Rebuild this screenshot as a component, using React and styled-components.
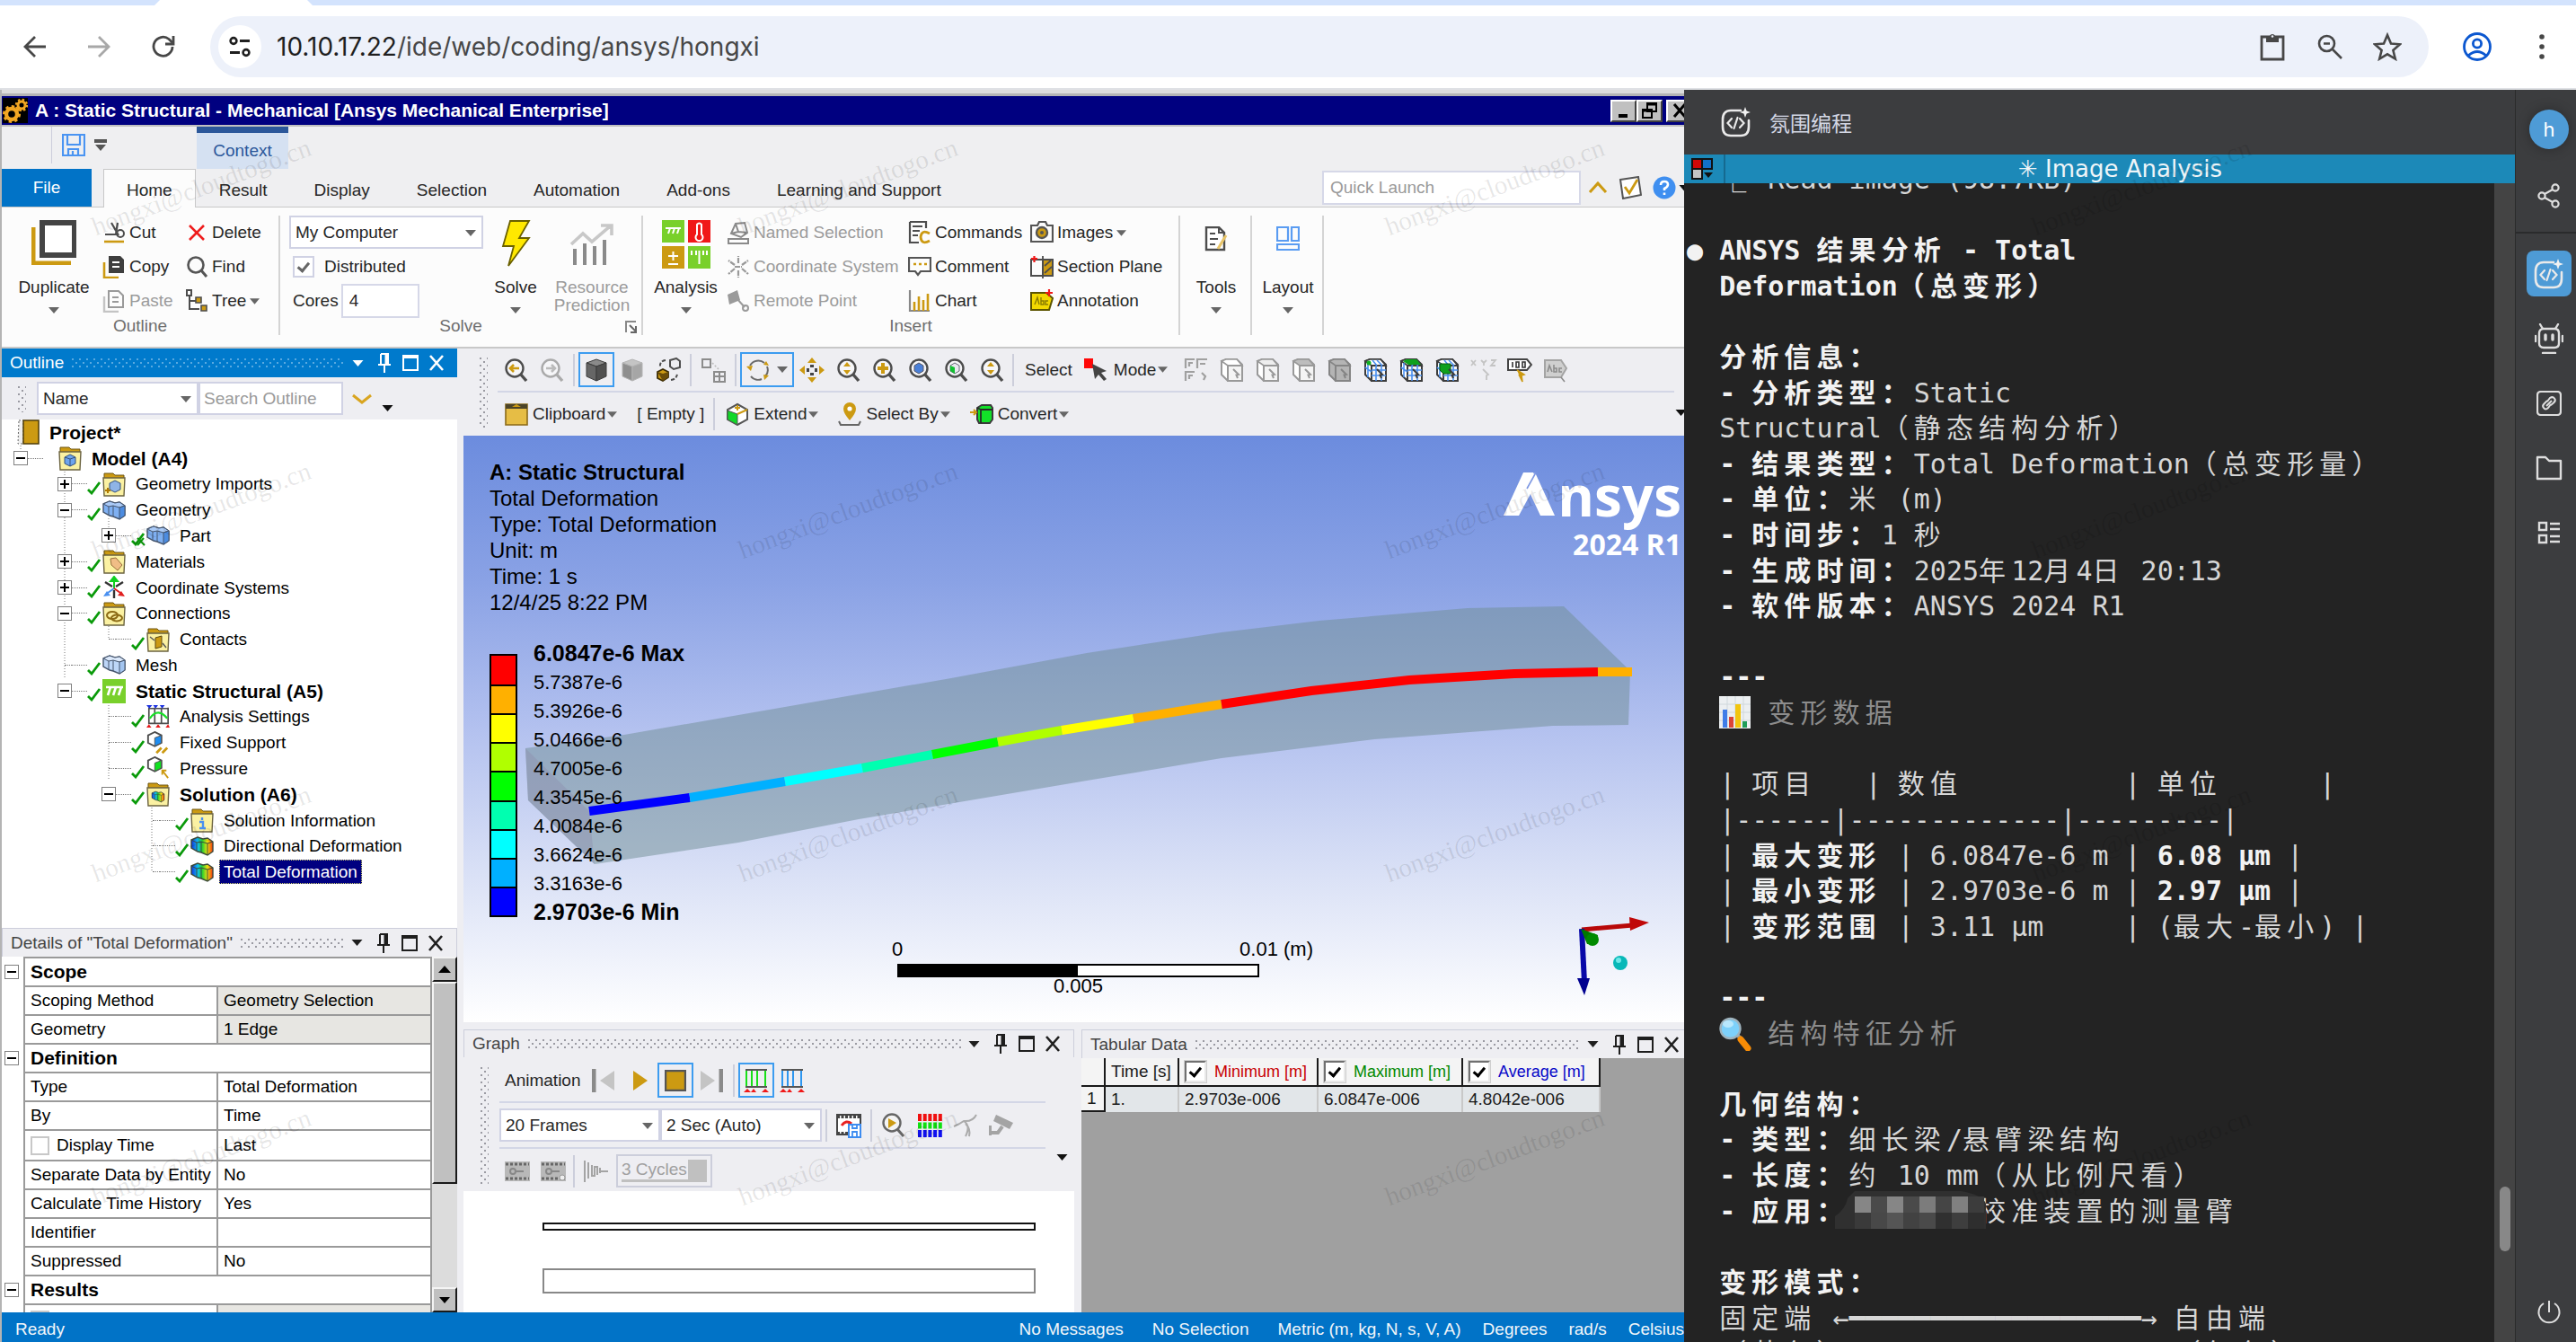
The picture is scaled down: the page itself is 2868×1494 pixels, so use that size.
import React from 'react';
import styled, { createGlobalStyle, css } from 'styled-components';

const UI = '"Liberation Sans", Arial, "Noto Sans CJK SC", sans-serif';
const MONO = '"DejaVu Sans Mono", "Noto Sans CJK SC", monospace';

const Global = createGlobalStyle`
  *, *::before, *::after { box-sizing: border-box; }
  html, body { margin: 0; padding: 0; }
  body { font-family: ${UI}; font-size: 19px; line-height: 20px; color: #262626; overflow: hidden; }
  button, input, select { font: inherit; color: inherit; margin: 0; padding: 0; border: 0; background: none; border-radius: 0; outline: none; }
  button { cursor: pointer; white-space: nowrap; }
  a { color: inherit; text-decoration: none; }
  svg { display: block; flex: none; }
`;

/* ---------- shell ---------- */

const Page = styled.div`
  position: relative;
  height: 100vh;
  display: grid;
  grid-template-rows: 100px minmax(0, 1fr);
  overflow: hidden;
`;
const Body = styled.div`
  display: grid;
  grid-template-columns: minmax(0, 1fr) 926px 67px;
  min-height: 0;
`;

/* ---------- browser ---------- */

const Browser = styled.header`
  background: #fff;
  border-bottom: 2px solid #dfe1e5;
  display: flex;
  flex-direction: column;
`;
const TabStrip = styled.div`
  height: 6px;
  background: #d3e3fd;
  padding-left: 172px;
`;
const ActiveTab = styled.div`
  width: 176px;
  height: 6px;
  background: #fff;
  clip-path: polygon(6px 0, 170px 0, 176px 100%, 0 100%);
`;
const NavRow = styled.div`
  flex: 1;
  display: flex;
  align-items: center;
  padding-left: 16px;
  color: #474747;
`;
const NavBtn = styled.button`
  width: ${(p) => p.$w || 72}px;
  height: 64px;
  display: grid;
  place-items: center;
  color: ${(p) => p.$c || '#474747'};
`;
const AddressBar = styled.div`
  flex: 1;
  height: 68px;
  margin: 0 20px 0 28px;
  border-radius: 34px;
  background: #edf1fa;
  display: flex;
  align-items: center;
  padding: 0 14px 0 9px;
`;
const SiteInfo = styled.button`
  width: 48px;
  height: 48px;
  border-radius: 50%;
  background: #fff;
  display: grid;
  place-items: center;
  margin-right: 17px;
`;
const UrlBox = styled.div`
  flex: 1;
  font-family: Inter, Roboto, sans-serif;
  font-size: 28px;
  line-height: 40px;
  color: #474747;
  b { font-weight: 400; color: #1f1f1f; }
`;

/* ---------- remote desktop ---------- */

const Remote = styled.main`
  display: flex;
  flex-direction: column;
  min-width: 0;
  min-height: 0;
  overflow: hidden;
  background: #eeeef2;
  border-left: 2px solid #b4b4b4;
`;
const TitleBar = styled.div`
  flex: none;
  height: 41px;
  border-top: 4px solid #dcdcdc;
  border-bottom: 2px solid #c0c0c0;
  box-shadow: inset 0 3px 0 #b4b4b4;
  padding-top: 3px;
  background: #000080;
  color: #fff;
  font-weight: 700;
  font-size: 21px;
  display: flex;
  align-items: center;
  gap: 8px;
  white-space: nowrap;
  svg { margin-left: 1px; }
`;
const WinButtons = styled.div`
  margin-left: auto;
  margin-right: -9px;
  display: flex;
`;
const WinButton = styled.button`
  width: 29px;
  height: 25px;
  background: #c0c0c0;
  border: 2px solid;
  border-color: #fff #404040 #404040 #fff;
  display: grid;
  place-items: center;
  svg { margin: 0; }
  &:last-child { margin-left: 4px; }
`;

const RibbonTop = styled.div`
  flex: none;
  height: 47px;
  background: #efeff1;
  display: flex;
`;
const QuickAccess = styled.div`
  width: 217px;
  display: flex;
  padding: 8px 0 14px 55px;
  gap: 10px;
  button:first-child { margin-left: 12px; }
  position: relative;
  &::before { content: ''; position: absolute; left: 55px; top: 0; height: 41px; border-left: 1px solid #ccceDB; }
`;
const ContextTab = styled.div`
  width: 102px;
  background: #d5e1f2;
  border-top: 7px solid #2b579a;
  color: #2b579a;
  text-align: center;
  line-height: 40px;
`;
const TabRow = styled.nav`
  flex: none;
  height: 43px;
  background: #efeff1;
  border-bottom: 1px solid #c8c8c8;
  display: flex;
  align-items: stretch;
`;
const FileTab = styled.button`
  width: 100px;
  margin-right: 13px;
  background: #0173c7;
  color: #fff;
`;
const Tab = styled.button`
  padding: 4px 25px 0;
  border: 1px solid transparent;
  border-bottom: 0;
  ${(p) => p.$on && css`
    background: #fcfcfc;
    border-color: #c8c8c8;
    margin-bottom: -1px;
  `}
`;
const TabTail = styled.div`
  margin-left: auto;
  margin-right: -8px;
  display: flex;
  align-items: center;
  gap: 12px;
  svg:last-child { margin-left: -10px; }
`;
const QuickLaunch = styled.input`
  width: 288px;
  height: 38px;
  border: 2px solid #d6d8e8;
  background: #fff;
  padding: 0 7px;
  margin-right: -4px;
  &::placeholder { color: #9a9a9a; opacity: 1; }
`;

const Ribbon = styled.div`
  flex: none;
  height: 157px;
  background: #fcfcfc;
  border-bottom: 2px solid #c8c8c8;
  display: flex;
  padding-top: 9px;
`;
const Group = styled.section`
  width: ${(p) => p.$w}px;
  height: 133px;
  border-right: 2px solid #d4d4d4;
  position: relative;
  display: flex;
  flex-direction: column;
`;
const GroupBody = styled.div`
  height: 113px;
  display: flex;
  padding-left: ${(p) => p.$pl || 0}px;
`;
const GroupLabel = styled.div`
  text-align: center;
  color: #6e6e6e;
`;
const Launcher = styled.button`
  position: absolute;
  right: 4px;
  bottom: 2px;
`;
const BigBtn = styled.button`
  width: ${(p) => p.$w}px;
  display: flex;
  flex-direction: column;
  align-items: center;
  padding-top: 5px;
  color: ${(p) => (p.$off ? '#9b9b9b' : 'inherit')};
  white-space: pre;
`;
const BigIcon = styled.span`
  height: 53px;
  margin-bottom: 12px;
  padding-top: ${(p) => p.$pt || 0}px;
`;
const BigArrow = styled.span`margin-top: 12px;`;
const Stack = styled.div`
  width: ${(p) => p.$w}px;
  display: grid;
  grid-auto-rows: 38px;
`;
const SmallBtn = styled.button`
  display: flex;
  align-items: center;
  gap: 4px;
  color: ${(p) => (p.$off ? '#9b9b9b' : 'inherit')};
`;
const FieldRow = styled.label`
  display: flex;
  align-items: center;
  gap: ${(p) => p.$gap || 3}px;
  padding-left: 4px;
`;
const CoresInput = styled.input`
  width: 87px;
  height: 38px;
  border: 2px solid #d6d8e8;
  background: #fff;
  padding-left: 7px;
`;

const SelectBox = styled.div`
  position: relative;
  width: ${(p) => p.$w}px;
  height: 37px;
  select {
    appearance: none;
    width: 100%;
    height: 100%;
    background: #fff;
    border: 2px solid #d0d2e4;
    padding: 0 24px 0 5px;
    color: #262626;
  }
  svg { position: absolute; right: 8px; top: 16px; pointer-events: none; }
`;

const Tick = styled.input.attrs({ type: 'checkbox' })`
  appearance: none;
  width: 24px;
  height: 24px;
  background: #fff;
  border: 2px solid #d0d2e4;
  display: grid;
  place-items: center;
  flex: none;
  &:checked::after {
    content: '';
    width: 8px;
    height: 13px;
    border: solid ${(p) => p.$tick || '#666'};
    border-width: 0 3px 3px 0;
    transform: rotate(40deg) translate(-1px, -1px);
  }
  ${(p) => p.$sunken && css`
    border: 2px solid;
    border-color: #707070 #e8e8e8 #e8e8e8 #707070;
    outline: 1px solid #cfcfcf;
  `}
`;

/* ---------- workspace ---------- */

const Workspace = styled.div`
  flex: 1;
  min-height: 0;
  display: grid;
  grid-template-columns: 507px minmax(0, 1fr);
  column-gap: 7px;
`;
const Dock = styled.div`
  display: flex;
  flex-direction: column;
  min-height: 0;
  min-width: 0;
`;
const PanelHead = styled.div`
  flex: none;
  height: ${(p) => p.$h || 32}px;
  display: flex;
  align-items: center;
  padding: 0 ${(p) => (p.$flush ? 0 : 9)}px 0 9px;
  background: ${(p) => (p.$on ? '#007acc' : '#eeeef2')};
  color: ${(p) => (p.$on ? '#fff' : '#444')};
  border: ${(p) => (p.$on ? '0' : '1px solid #ccceDB')};
  border-width: ${(p) => (p.$flush ? '1px 0 0 1px' : '1px 1px 0')};
  white-space: nowrap;
`;
const Dots = styled.span`
  flex: 1;
  height: 12px;
  margin-left: 8px;
  background-image: radial-gradient(circle at 2px 2px, ${(p) => p.$c} 1px, transparent 1px), radial-gradient(circle at 6px 6px, ${(p) => p.$c} 1px, transparent 1px);
  background-size: 8px 8px;
`;
const HeadBtn = styled.button`
  width: 29px;
  height: 30px;
  display: grid;
  place-items: center;
  color: ${(p) => (p.$on ? '#fff' : '#1e1e1e')};
`;
const Grip = styled.span`
  width: 10px;
  align-self: stretch;
  margin: ${(p) => p.$m || '9px 0'};
  flex: none;
  background-image: radial-gradient(circle at 2px 2px, #9a9aa2 1px, transparent 1px), radial-gradient(circle at 6px 6px, #9a9aa2 1px, transparent 1px);
  background-size: 8px 8px;
`;

const Filter = styled.div`
  flex: none;
  height: 47px;
  display: flex;
  align-items: center;
  padding-left: 17px;
`;
const SearchInput = styled.input`
  width: 161px;
  height: 37px;
  border: 2px solid #d0d2e4;
  background: #fff;
  padding-left: 4px;
  margin: 0 9px 0 0;
  &::placeholder { color: #9a9a9a; opacity: 1; }
`;
const TreeArea = styled.div`
  flex: 1;
  background: #fff;
  position: relative;
  min-height: 0;
  color: #000;
`;
const TreeLines = styled.svg`
  position: absolute;
  left: 0;
  top: 0;
`;
const Tree = styled.ul`
  position: relative;
  list-style: none;
  margin: 0;
  padding: 0;
  height: 518px;
  display: grid;
  grid-auto-rows: 1fr;
`;
const TreeRow = styled.li`
  display: flex;
  align-items: center;
  padding-left: ${(p) => p.$pl}px;
  white-space: nowrap;
  font-weight: ${(p) => (p.$bold ? 700 : 400)};
  font-size: ${(p) => (p.$bold ? 21 : 19)}px;
`;
const Expander = styled.button`
  width: 16px;
  height: 16px;
  border: 1px solid #808080;
  background: #fff;
  display: grid;
  place-items: center;
  flex: none;
`;
const Connector = styled.span`
  width: ${(p) => p.$w}px;
  margin-left: ${(p) => p.$ml || 0}px;
  border-top: 1px dotted #777;
  flex: none;
`;
const CheckCell = styled.span`
  width: 17px;
  flex: none;
  padding-top: 9px;
`;
const NodeLabel = styled.span`
  margin-left: 6px;
  padding: 0 4px;
  border: 1px solid transparent;
  line-height: 25px;
  ${(p) => p.$sel && css`
    background: #000080;
    color: #fff;
    border: 1px dotted #d8d870;
  `}
`;

const Details = styled.div`
  flex: none;
  height: 396px;
  display: flex;
  background: #fff;
  overflow: hidden;
`;
const DetailTable = styled.table`
  width: 478px;
  height: 422px;
  border-collapse: collapse;
  table-layout: fixed;
  color: #000;
  th, td { padding: 0 6px; text-align: left; font-weight: 400; border: 2px solid #9a9a9a; white-space: nowrap; line-height: 20px; }
  td:first-child { border-width: 0 2px 0 0; padding: 0 3px; }
  th[colspan] { font-weight: 700; font-size: 21px; }
`;
const Val = styled.td`
  background: ${(p) => (p.$g ? '#e7e6e2' : '#fff')};
`;
const Inline = styled.label`
  display: flex;
  align-items: center;
  gap: 8px;
`;
const SmallTick = styled(Tick)`
  width: 21px;
  height: 21px;
  border-color: #c8c8c8;
`;
const Scroll = styled.div`
  flex: 1;
  display: flex;
  flex-direction: column;
  background: #dcdcdc;
`;
const ScrollBtn = styled.button`
  height: 28px;
  background: #c0c0c0;
  border: 2px solid;
  border-color: #f4f4f4 #1a1a1a #1a1a1a #f4f4f4;
  display: grid;
  place-items: center;
`;
const Thumb = styled.div`
  height: 225px;
  background: #c0c0c0;
  border: 2px solid;
  border-color: #f4f4f4 #1a1a1a #1a1a1a #f4f4f4;
  margin-bottom: auto;
`;

const ToolArea = styled.div`
  flex: none;
  height: ${(p) => p.$h}px;
  display: flex;
  padding-left: ${(p) => p.$pl}px;
  background: #eeeef2;
`;
const ToolRows = styled.div`
  flex: 1;
  min-width: 0;
  margin: ${(p) => p.$m};
`;
const ToolRow = styled.div`
  height: ${(p) => p.$h}px;
  display: flex;
  align-items: center;
  white-space: nowrap;
  & + & { border-top: 2px solid #d3d6e6; }
`;
const Tool = styled.button`
  width: ${(p) => p.$w || 40}px;
  height: 39px;
  display: flex;
  align-items: center;
  justify-content: center;
  gap: 8px;
  flex: none;
  ${(p) => p.$on && css`border: 2px solid #3c9cf0;`}
`;
const Sep = styled.span`
  width: 2px;
  height: 36px;
  background: #ccceDB;
  margin: 0 ${(p) => (p.$r === undefined ? 4 : p.$r)}px 0 ${(p) => (p.$l === undefined ? 4 : p.$l)}px;
  flex: none;
`;
const DropBtn = styled.button`
  display: flex;
  align-items: center;
  gap: 2px;
  margin-right: ${(p) => (p.$mr === undefined ? 22 : p.$mr)}px;
  svg:first-child { margin-right: 3px; }
`;
const ToolLabel = styled.span`
  margin: 0 ${(p) => p.$r || 0}px 0 ${(p) => p.$l || 0}px;
`;
const Overflow = styled.button`
  align-self: ${(p) => p.$at || 'center'};
  margin: ${(p) => p.$m || 0};
  flex: none;
`;

const Viewport = styled.div`
  flex: 1;
  min-height: 0;
  position: relative;
  overflow: hidden;
  background: linear-gradient(#6c8cde 0%, #8aa2e5 25%, #b3c1ef 50%, #dae1f6 75%, #fff 100%);
  color: #000;
`;
const Scene = styled.svg`
  position: absolute;
  inset: 0;
  width: 100%;
  height: 100%;
`;
const Caption = styled.div`
  position: relative;
  padding: 26px 0 0 29px;
  font-size: 24px;
  line-height: 29px;
`;
const Legend = styled.div`
  position: relative;
  display: flex;
  gap: 18px;
  padding: 27px 0 0 29px;
`;
const LegendBar = styled.div`
  width: 31px;
  height: 293px;
  margin-top: 16px;
  border: 2px solid #000;
  display: grid;
  grid-auto-rows: 1fr;
`;
const Swatch = styled.div`
  background: ${(p) => p.$c};
  & + & { border-top: 2px solid #000; }
`;
const LegendText = styled.ol`
  list-style: none;
  margin: 0;
  padding: 0;
  height: 320px;
  display: grid;
  grid-auto-rows: 1fr;
  align-items: center;
  font-size: 22px;
  b { font-size: 25px; }
`;
const Brand = styled.div`
  position: absolute;
  right: 3px;
  top: 31px;
  color: #fff;
  text-align: right;
  font-family: "Open Sans", sans-serif;
  font-weight: 700;
`;
const BrandName = styled.div`
  display: flex;
  justify-content: flex-end;
  font-size: 62px;
  line-height: 70px;
  svg { margin: 10px 3px 0 0; }
`;
const BrandVer = styled.div`
  font-size: 32px;
  line-height: 40px;
`;
const Ruler = styled.div`
  position: absolute;
  left: 483px;
  bottom: 30px;
  width: 403px;
  font-size: 22px;
  line-height: 24px;
`;
const RulerTop = styled.div`
  display: flex;
  justify-content: space-between;
  margin: 0 -60px 4px -6px;
`;
const RulerBar = styled.div`
  height: 15px;
  border: 2px solid #000;
  background: linear-gradient(90deg, #000 50%, #fff 50%);
`;
const RulerMid = styled.div`
  text-align: center;
  line-height: 20px;
`;

const Bottom = styled.div`
  flex: none;
  height: 315px;
  margin-top: 8px;
  display: grid;
  grid-template-columns: 680px minmax(0, 1fr);
  column-gap: 8px;
`;
const GraphArea = styled.div`
  flex: 1;
  background: #fff;
  padding: 35px 43px 0 88px;
`;
const Track = styled.div`
  height: ${(p) => p.$h}px;
  border: 2px solid ${(p) => p.$c};
  margin-bottom: 42px;
`;
const CycleBox = styled.div`
  width: 107px;
  height: 37px;
  border: 2px solid #ccceDB;
  padding: 4px;
  display: flex;
  margin-left: 3px;
  input { width: 74px; color: #a0a0a0; border-bottom: 3px solid #c0c0c0; }
  &::after { content: ''; flex: 1; background: #c0c0c0; }
`;
const DataArea = styled.div`
  flex: 1;
  background: #a0a0a0;
  overflow: hidden;
`;
const DataTable = styled.table`
  border-collapse: separate;
  border-spacing: 0;
  table-layout: fixed;
  width: 578px;
  color: #1a1a1a;
  th, td { padding: 0 6px; text-align: left; font-weight: 400; white-space: nowrap; }
  thead th { height: 32px; background: #f4f4f4; border: solid #1a1a1a; border-width: 0 2px 2px 0; }
  tbody td { height: 28px; background: #e2e6e9; border-right: 2px solid #c8c8c8; }
  tbody th { background: #f4f4f4; border: solid #1a1a1a; border-width: 0 2px 2px 0; }
`;
const SeriesHead = styled.label`
  display: flex;
  align-items: center;
  gap: 9px;
  color: ${(p) => p.$c};
  font-size: 18px;
`;
const Status = styled.footer`
  flex: none;
  height: 33px;
  background: #0173c7;
  color: #f2f6fa;
  display: flex;
  align-items: center;
  gap: 24px;
  padding: 4px 0 0 15px;
  white-space: nowrap;
`;
const StatusItem = styled.span`
  margin-left: ${(p) => p.$ml || 0};
`;

/* ---------- assistant ---------- */

const Assistant = styled.section`
  display: flex;
  flex-direction: column;
  min-height: 0;
  background: #232323;
  border-right: 1px solid #2b2b2b;
`;
const AssistHead = styled.div`
  flex: none;
  height: 72px;
  background: #3c3d3f;
  display: flex;
  align-items: center;
  gap: 20px;
  padding-left: 41px;
  color: #d3d7e4;
  font-family: "Noto Sans CJK SC", sans-serif;
  font-size: 23px;
`;
const Pane = styled.div`
  flex: none;
  height: 32px;
  background: #1c89b8;
  display: flex;
  align-items: center;
  color: #eef5f8;
  font-family: "DejaVu Sans", sans-serif;
  font-size: 26px;
  line-height: 32px;
`;
const PaneIcon = styled.button`
  width: 46px;
  height: 32px;
  border-right: 2px solid #156a90;
  padding-left: 8px;
`;
const PaneTitle = styled.div`
  flex: 1;
  text-align: center;
`;
const TermWrap = styled.div`
  flex: 1;
  min-height: 0;
  display: flex;
`;
const Term = styled.div`
  flex: 1;
  overflow: hidden;
  padding-left: 3px;
`;
const Lines = styled.div`
  height: 1347px;
  margin-top: -24px;
  display: grid;
  grid-auto-rows: 1fr;
  align-items: center;
  font-family: ${MONO};
  font-size: 30px;
  line-height: 38px;
  color: #d6d6d6;
  white-space: pre;
  b { color: #f2f2f2; }
`;
const TLine = styled.div`
  height: 38px;
  color: ${(p) => p.$c || 'inherit'};
`;
const Cell = styled.span`
  display: inline-block;
  width: ${(p) => p.$n || 2}ch;
  vertical-align: top;
`;
const TermScroll = styled.div`
  width: 23px;
  background: #444;
  padding: 1117px 5px 0 6px;
  &::after { content: ''; display: block; height: 72px; border-radius: 6px; background: #888; }
`;
const Blur = styled.span`
  display: inline-block;
  width: 8ch;
  height: 38px;
  vertical-align: top;
  position: relative;
  svg { position: absolute; left: -16px; top: -4px; }
`;
const Side = styled.aside`
  background: #3c3d3f;
  display: flex;
  flex-direction: column;
  align-items: center;
  padding-left: 7px;
  color: #dedede;
`;
const Avatar = styled.button`
  width: 44px;
  height: 44px;
  margin-top: 22px;
  border-radius: 50%;
  background: #4e9bd6;
  color: #fff;
  font-family: Inter, sans-serif;
  font-size: 22px;
  box-shadow: 0 0 14px rgba(0, 0, 0, 0.3);
`;
const SideBtn = styled.button`
  width: 50px;
  height: 51px;
  margin-top: ${(p) => (p.$mt === undefined ? 21 : p.$mt)}px;
  border-radius: 8px;
  display: grid;
  place-items: center;
  background: ${(p) => (p.$on ? '#4e9bd6' : 'none')};
`;
const SideRule = styled.hr`
  width: 67px;
  margin: 15px 0 0 -7px;
  border: 0;
  border-top: 2px solid #2a2b2c;
`;

const Marks = styled.div`
  position: absolute;
  inset: 100px 0 0 0;
  overflow: hidden;
  pointer-events: none;
  display: grid;
  grid-template-columns: repeat(4, 720px);
  grid-auto-rows: 360px;
`;
const Mark = styled.div`
  width: 448px;
  height: 216px;
  display: grid;
  place-items: center;
  font-family: "Liberation Serif", serif;
  font-size: 29px;
  color: rgba(0, 0, 0, 0.1);
  span { transform: rotate(-20.5deg); }
`;

/* ---------- icons ---------- */

const I = ({ w = 26, h = 26, vb, children, ...r }) => (
  <svg width={w} height={h} viewBox={vb || `0 0 ${w} ${h}`} fill="none" aria-hidden="true" {...r}>{children}</svg>
);
const Down = ({ c = '#666', w = 12 }) => (
  <I w={w} h={7} vb="0 0 12 7"><path d="M0 0H12L6 7Z" fill={c} /></I>
);
const G = '#cc9a12';
const D = '#4d4d4d';

const Mag = ({ c = D, children }) => (
  <I w={28} h={28}>
    <circle cx="13" cy="12" r="9.5" stroke={c} strokeWidth="2.4" fill="#f6f6f8" />
    <path d="M19.5 18.5L26 26" stroke={c} strokeWidth="3.4" />
    {children}
  </I>
);
const Cube = ({ a = '#8a8a8a', b = '#666', c = '#505050', s = '#3c3c3c' }) => (
  <I w={26} h={26}>
    <path d="M13 1L24 5L13 9L2 5Z" fill={a} stroke={s} />
    <path d="M2 5L13 9V25L2 20Z" fill={b} stroke={s} />
    <path d="M24 5L13 9V25L24 20Z" fill={c} stroke={s} />
  </I>
);
const SelCube = ({ front = '#f4f4f4', side = '#fff', top = '#fff', s = '#999', grid, mark }) => (
  <I w={28} h={28}>
    <path d="M2 4L7 2H19L25 8V26H9L2 19Z" fill={side} stroke={s} strokeWidth="2" />
    <path d="M2 4L9 9H25L19 2H7Z" fill={top} stroke={s} strokeWidth="1.6" />
    <path d="M9 9H25V26H9Z" fill={front} stroke={s} strokeWidth="2" />
    {grid && <path d="M14 9V26M20 9V26M9 14H25M9 20H25M5 6V22M2 11L9 16M10 3L15 9M15 3L21 9" stroke="#4a90f0" strokeWidth="1.6" />}
    {mark}
    <path d="M15 13L21 19L18.5 19.5L20 23" stroke={s} strokeWidth="2" />
  </I>
);
const Folder = ({ children }) => (
  <I w={26} h={28}>
    <path d="M2 8V2H12L14 4H24V8Z" fill={G} stroke="#6d5410" />
    <path d="M1 7H25L24 27H2Z" fill="#fbf1a2" stroke="#6b6340" strokeWidth="1.4" />
    {children}
  </I>
);
const Boxes = ({ a, b, c }) => (
  <I w={26} h={24}>
    <path d="M1 5L8 2L14 4L19 3L25 7V18L19 22L12 19L8 18L1 14Z" fill={b} stroke="#44546c" strokeWidth="1.4" />
    <path d="M1 5L8 2L14 4L19 3L25 7L19 9L12 7L7 8Z" fill={a} stroke="#44546c" />
    <path d="M19 9L25 7V18L19 22Z" fill={c} stroke="#44546c" />
    <path d="M12 7V19M7 8V17" stroke="#44546c" />
  </I>
);
const Rainbow = ({ w = 26 }) => (
  <I w={w} h={24} vb="0 0 26 24">
    <defs>
      <linearGradient id="rb" x1="0" x2="1"><stop offset="0" stopColor="#1030e0" /><stop offset=".3" stopColor="#10c0f0" /><stop offset=".5" stopColor="#20d030" /><stop offset=".75" stopColor="#f0e010" /><stop offset="1" stopColor="#f03010" /></linearGradient>
    </defs>
    <path d="M1 5L8 2L14 4L19 3L25 7V18L19 22L12 19L8 18L1 14Z" fill="url(#rb)" stroke="#3a4a3a" strokeWidth="1.4" />
    <path d="M1 5L7 8V17M7 8L12 7V19M12 7L19 9V22M19 9L25 7" stroke="#3a4a3a" />
  </I>
);
const nodeIcons = {
  project: <I w={26} h={28}><path d="M3 1H8V27H2Z" fill="#eee" stroke="#666" strokeDasharray="2 2" /><path d="M8 1H25V27H8Z" fill={G} stroke="#4d3c08" strokeWidth="1.5" /></I>,
  model: <Folder><path d="M13 10L19 13V20L13 23L7 20V13Z" fill="#6ea4ee" stroke="#33507c" /><path d="M7 13L13 15L19 13M13 15V23" stroke="#33507c" /></Folder>,
  imports: <Folder><path d="M14 10L20 13V20L14 23L8 20V13Z" fill="#8fb4e6" stroke="#33507c" /><path d="M3 21H9M6 18V24" stroke="#b07a00" strokeWidth="2" /></Folder>,
  geometry: <Boxes a="#a9c9f6" b="#7fb0f2" c="#4c8ce0" />,
  materials: <Folder><path d="M9 11L15 10L22 18L17 24L10 18Z" fill="#f0bd86" stroke="#96703c" /></Folder>,
  coords: <I w={26} h={26}><path d="M13 14V4M9 6L13 1L17 6Z" stroke="#10d020" fill="#10d020" strokeWidth="2" /><path d="M13 14L6 19" stroke="#4a90f0" strokeWidth="2" /><path d="M1 23L9 22L5 17Z" fill="#4a90f0" /><path d="M13 14L20 19" stroke="#e02020" strokeWidth="2" /><path d="M25 23L17 22L21 17Z" fill="#e02020" /><path d="M3 7L11 12M23 7L15 12M13 16V25" stroke="#333" strokeWidth="2.4" /></I>,
  connections: <Folder><ellipse cx="11" cy="16" rx="6" ry="4" stroke="#8c6a14" strokeWidth="2" /><ellipse cx="16" cy="19" rx="6" ry="3.5" stroke="#8c6a14" strokeWidth="2" /></Folder>,
  contacts: <Folder><path d="M10 12L17 10V22L10 24Z" fill={G} stroke="#5a470e" /><path d="M4 11L9 15M18 18L22 23" stroke="#555" strokeWidth="1.4" /></Folder>,
  mesh: <Boxes a="#dce9fb" b="#bdd6f7" c="#a3c5f0" />,
  statics: <I w={26} h={27}><path d="M0 0H26V27H0Z" fill="#79d02b" /><path d="M4 9H23M9 9L6 18M15 9L12 18M21 9L18 18" stroke="#fff" strokeWidth="2.6" /></I>,
  settings: <I w={26} h={28} vb="0 0 28 28"><path d="M3 3V23M10 3V23M18 3V23M26 3V23M3 4H26M3 22H26" stroke={D} strokeWidth="1.8" /><path d="M4 16Q14 2 25 16" stroke="#18e028" strokeWidth="2.6" /><path d="M0 0H7L3.500 4ZM8 0H14L11 4ZM16 0H22L19 4Z" fill="#1a30e0" /><path d="M0 27L3 23L6 27ZM11 27L14 23L17 27ZM23 27L26 23L28 27Z" fill="#e81818" /></I>,
  fixed: <I w={26} h={28} vb="0 0 28 28"><path d="M10 1L18 5V14L10 18L2 14V5Z" fill="#fff" stroke={D} strokeWidth="2" /><path d="M10 8L18 5V14L10 18Z" fill="#1d8cf0" stroke={D} /><path d="M12 26L18 20M19 26L25 20" stroke={G} strokeWidth="3" /></I>,
  pressure: <I w={26} h={28} vb="0 0 28 28"><path d="M10 1L18 5V14L10 18L2 14V5Z" fill="#fff" stroke={D} strokeWidth="2" /><path d="M10 8L18 5V14L10 18Z" fill="#10e020" stroke={D} /><path d="M19 17L26 26M19 22V17H24" stroke={G} strokeWidth="2" /></I>,
  solution: <Folder><svg x="5" y="10" width="16" height="14" viewBox="0 0 26 24"><Rainbow /></svg></Folder>,
  info: <Folder><path d="M13 11V14M10 16H14V23M10 23H17" stroke="#4a90f0" strokeWidth="2.4" /></Folder>,
  result: <Rainbow />,
};
const GreenCheck = ({ x }) => (
  <I w={16} h={15}><path d="M1 9L5 13L14 1" stroke="#0a9a0a" strokeWidth="2.8" />{x && <path d="M7 6L15 14M14 6L7 14" stroke="#0a9a0a" strokeWidth="2" />}</I>
);

const PinIcon = () => <I w={16} h={24}><path d="M4 2H12V14M4 2V14M1 14H15M8 14V23" stroke="currentColor" strokeWidth="2" /><path d="M10 2V14" stroke="currentColor" strokeWidth="3" /></I>;
const MaxIcon = () => <I w={18} h={18}><path d="M1 1H17V17H1Z" stroke="currentColor" strokeWidth="2" /><path d="M1 2.500H17" stroke="currentColor" strokeWidth="3" /></I>;
const XIcon = () => <I w={18} h={18}><path d="M2 1L16 17M16 1L2 17" stroke="currentColor" strokeWidth="2.6" /></I>;

const Vibe = ({ s = 34 }) => (
  <I w={s} h={s} vb="0 0 34 34">
    <path d="M22 4H11Q2 4 2 14V22Q2 32 11 32H22Q31 32 31 22V15" stroke="#eaeaea" strokeWidth="2.6" strokeLinecap="round" />
    <path d="M12 13L7.500 18L12 23M21 13L25.500 18L21 23M18.500 12L14.500 24" stroke="#eaeaea" strokeWidth="2.2" strokeLinecap="round" />
    <path d="M27 0L28.600 4.400L33 6L28.600 7.600L27 12L25.400 7.600L21 6L25.400 4.400Z" fill="#f2f2f2" />
  </I>
);

/* ---------- parts ---------- */

function Head({ title, on, flush, h }) {
  return (
    <PanelHead $on={on} $flush={flush} $h={h}>
      <span>{title}</span>
      <Dots $c={on ? '#59a9e0' : '#9a9aa2'} />
      <HeadBtn $on={on} aria-label="Menu"><Down c="currentColor" w={15} /></HeadBtn>
      <HeadBtn $on={on} aria-label="Pin"><PinIcon /></HeadBtn>
      <HeadBtn $on={on} aria-label="Maximize"><MaxIcon /></HeadBtn>
      <HeadBtn $on={on} aria-label="Close"><XIcon /></HeadBtn>
    </PanelHead>
  );
}

function Drop({ label, value, w }) {
  return (
    <SelectBox $w={w}>
      <select aria-label={label} defaultValue={value}><option>{value}</option></select>
      <Down />
    </SelectBox>
  );
}

const wide = /[\u3000-\u303f\u4e00-\u9fff\uff00-\uffef]/;
function T({ t }) {
  const out = [];
  let run = '';
  [...t].forEach((ch, i) => {
    if (wide.test(ch)) {
      if (run) out.push(run);
      run = '';
      out.push(<Cell key={i}>{ch}</Cell>);
    } else run += ch;
  });
  if (run) out.push(run);
  return out;
}
const B = ({ t }) => <b><T t={t} /></b>;

const nodes = [
  ['Project*', 'project', 0, null, true],
  ['Model (A4)', 'model', 1, '-', true],
  ['Geometry Imports', 'imports', 2, '+'],
  ['Geometry', 'geometry', 2, '-'],
  ['Part', 'geometry', 3, '+'],
  ['Materials', 'materials', 2, '+'],
  ['Coordinate Systems', 'coords', 2, '+'],
  ['Connections', 'connections', 2, '-'],
  ['Contacts', 'contacts', 3, null],
  ['Mesh', 'mesh', 2, null],
  ['Static Structural (A5)', 'statics', 2, '-', true],
  ['Analysis Settings', 'settings', 3, null],
  ['Fixed Support', 'fixed', 3, null],
  ['Pressure', 'pressure', 3, null],
  ['Solution (A6)', 'solution', 3, '-', true],
  ['Solution Information', 'info', 4, null],
  ['Directional Deformation', 'result', 4, null],
  ['Total Deformation', 'result', 4, null, false, true],
];

const Toggle = ({ open }) => (
  <Expander aria-label={open ? 'Collapse' : 'Expand'}>
    <I w={10} h={10}><path d={open ? 'M0 5H10' : 'M0 5H10M5 0V10'} stroke="#000" strokeWidth="2" /></I>
  </Expander>
);

function Node({ n }) {
  const [label, icon, level, exp, bold, sel] = n;
  if (level === 0) {
    return (
      <TreeRow $pl={16} $bold>
        {nodeIcons[icon]}
        <NodeLabel>{label}</NodeLabel>
      </TreeRow>
    );
  }
  return (
    <TreeRow $pl={(level - 1) * 49 + 13} $bold={bold}>
      {exp ? <Toggle open={exp === '-'} /> : <Connector $w={8} $ml={8} />}
      <Connector $w={17} />
      <CheckCell>{level > 1 && <GreenCheck x={label === 'Part'} />}</CheckCell>
      {nodeIcons[icon]}
      <NodeLabel $sel={sel}>{label}</NodeLabel>
    </TreeRow>
  );
}

const details = [
  ['Scope'],
  ['Scoping Method', 'Geometry Selection', true],
  ['Geometry', '1 Edge', true],
  ['Definition'],
  ['Type', 'Total Deformation'],
  ['By', 'Time'],
  ['Display Time', 'Last', false, true],
  ['Separate Data by Entity', 'No'],
  ['Calculate Time History', 'Yes'],
  ['Identifier', ''],
  ['Suppressed', 'No'],
  ['Results'],
  ['', '', true, true],
];

const legendColors = ['#ff0000', '#ffb000', '#ffff00', '#b0ff00', '#00ff00', '#00ffb0', '#00ffff', '#00b0ff', '#0000ff'];
const legendValues = ['5.7387e-6', '5.3926e-6', '5.0466e-6', '4.7005e-6', '4.3545e-6', '4.0084e-6', '3.6624e-6', '3.3163e-6'];

const beam = [
  ['#0000ff', 'M656 903L768 888'],
  ['#00b0ff', 'M768 888L874 870'],
  ['#00ffff', 'M874 870L960 855'],
  ['#00ffb0', 'M960 855L1038 840'],
  ['#00ff00', 'M1038 840L1111 826'],
  ['#b0ff00', 'M1111 826L1182 813'],
  ['#ffff00', 'M1182 813L1262 800'],
  ['#ffb000', 'M1262 800L1360 784'],
  ['#ff0000', 'M1360 784L1460 769L1569 757L1686 750L1779 748'],
  ['#ffb000', 'M1779 748H1817'],
];

function SceneDrawing() {
  return (
    <Scene viewBox="516 485 1359 653" preserveAspectRatio="xMinYMin slice" aria-hidden="true">
      <path d="M585 833L695 818L874 787L1059 755L1210 727L1360 704L1469 691L1634 677L1741 675L1810 742L1815 747L1813 807L1729 808L1530 823L1360 844L1210 869L956 912L822 938L662 962L588 891Z" fill="#6f8d93" fillOpacity=".5" />
      <path d="M585 833L656 903L662 962L588 891Z" fill="#8f90b0" fillOpacity=".45" />
      {beam.map(([c, d]) => <path key={d} d={d} stroke={c} strokeWidth="10" fill="none" />)}
      <path d="M1761 1035L1818 1030" stroke="#b80808" strokeWidth="5" />
      <path d="M1814 1021L1836 1027L1815 1036Z" fill="#c00808" />
      <path d="M1761 1034L1764 1094" stroke="#0808a8" strokeWidth="6" />
      <path d="M1756 1089H1770L1764 1108Z" fill="#000090" />
      <path d="M1760 1034L1779 1041L1777 1051L1767 1051Z" fill="#007800" />
      <circle cx="1773" cy="1046" r="7" fill="#008a00" />
      <circle cx="1804" cy="1072" r="8" fill="#08b8b8" />
      <circle cx="1802" cy="1069" r="3" fill="#70e8e8" />
    </Scene>
  );
}

function RibbonBar() {
  return (
    <Ribbon>
      <Group $w={310}>
        <GroupBody $pl={4}>
          <BigBtn $w={108}>
            <BigIcon><I w={50} h={50}><path d="M2 8V48H44" stroke={G} strokeWidth="5" /><path d="M12 3H48V39H12Z" stroke="#444" strokeWidth="6" fill="#fff" /></I></BigIcon>
            Duplicate
            <BigArrow><Down /></BigArrow>
          </BigBtn>
          <Stack $w={92}>
            <SmallBtn><I><path d="M2 23H24" stroke={G} strokeWidth="2.600" /><circle cx="20" cy="14" r="4" stroke={D} strokeWidth="2" /><path d="M3 15H15L17 2M10 2L18 16" stroke={D} strokeWidth="2.200" /></I>Cut</SmallBtn>
            <SmallBtn><I><path d="M2 8V25H18" stroke={G} strokeWidth="2.600" /><path d="M7 1H20L24 5V20H7Z" fill="#3e3e3e" /><path d="M11 8H19M11 13H19" stroke="#fff" strokeWidth="2" /></I>Copy</SmallBtn>
            <SmallBtn $off><I><path d="M2 8V25H18" stroke="#c4c4c4" strokeWidth="2.400" /><path d="M7 2H18L23 7V20H7Z" stroke="#9a9a9a" strokeWidth="2" /><path d="M11 9H18M11 14H18" stroke="#9a9a9a" strokeWidth="2" /></I>Paste</SmallBtn>
          </Stack>
          <Stack $w={100}>
            <SmallBtn><I><path d="M5 5L21 21M21 5L5 21" stroke="#ee1c1c" strokeWidth="2.600" /></I>Delete</SmallBtn>
            <SmallBtn><I><circle cx="12" cy="11" r="8.500" stroke="#555" strokeWidth="2.600" /><path d="M18 17L24 24" stroke="#555" strokeWidth="3" /></I>Find</SmallBtn>
            <SmallBtn><I><path d="M2 1H7V7H2ZM5 7V22H16M5 13H13" stroke={D} strokeWidth="2" /><path d="M12 9H18V15H12ZM18 18H24V24H18Z" fill={G} stroke={D} strokeWidth="1.600" /></I>Tree<Down w={11} /></SmallBtn>
          </Stack>
        </GroupBody>
        <GroupLabel>Outline</GroupLabel>
      </Group>
      <Group $w={404}>
        <GroupBody $pl={10}>
          <Stack $w={217}>
            <Drop label="Solve target" value="My Computer" w={216} />
            <FieldRow $gap={11}><Tick defaultChecked />Distributed</FieldRow>
            <FieldRow>Cores<CoresInput defaultValue="4" /></FieldRow>
          </Stack>
          <BigBtn $w={70}>
            <BigIcon><I w={36} h={52}><path d="M12 1H33L22 20H33L10 51L16 29H4Z" fill="#ffe800" stroke="#6a6000" strokeWidth="1.800" /></I></BigIcon>
            Solve
            <BigArrow><Down /></BigArrow>
          </BigBtn>
          <BigBtn $w={100} $off>
            <BigIcon><I w={52} h={52}><path d="M7 32V50M18 26V50M29 29V50M40 22V50" stroke="#8a8a8a" strokeWidth="4" /><path d="M3 27L16 15L26 24L46 7M36 6H48V17" stroke="#c8c8c8" strokeWidth="3.600" /></I></BigIcon>
            {'Resource\nPrediction'}
          </BigBtn>
        </GroupBody>
        <GroupLabel>Solve</GroupLabel>
        <Launcher aria-label="Solve options"><I w={14} h={14}><path d="M1 13V1H12" stroke="#888" strokeWidth="2" /><path d="M5 5L12 12M12 6V13H6" stroke="#666" strokeWidth="2" /></I></Launcher>
      </Group>
      <Group $w={598}>
        <GroupBody $pl={2}>
          <BigBtn $w={91}>
            <BigIcon><I w={54} h={54}><path d="M0 0H25V25H0ZM29 29H54V54H29Z" fill="#79d02b" /><path d="M29 0H54V25H29Z" fill="#f01818" /><path d="M0 29H25V54H0Z" fill={G} /><path d="M4 9H21M9 9L7 15M14 9L12 15M19 9L17 15M7 40H18M12.500 35V45M7 49H18M33 34V39M38 34V39M46 34V39M50 34V39M41.500 34V49" stroke="#fff" strokeWidth="2" /><path d="M39 16V5Q41.500 2 44 5V16A4 4 0 1 1 39 16Z" stroke="#fff" strokeWidth="2" /></I></BigIcon>
            Analysis
            <BigArrow><Down /></BigArrow>
          </BigBtn>
          <Stack $w={202}>
            <SmallBtn $off><I><path d="M2 20H24V25H2ZM5 14L10 3L20 2L23 13L16 18L5 14ZM10 3L13 12L5 14M13 12L23 13" stroke="#8a8a8a" strokeWidth="2" /></I>Named Selection</SmallBtn>
            <SmallBtn $off><I><path d="M13 9V1M13 17V25M9 11L2 6M17 11L24 6M9 15L2 21M17 15L24 21M9 13H17" stroke="#9a9a9a" strokeWidth="2.200" strokeDasharray="6 1" /></I>Coordinate System</SmallBtn>
            <SmallBtn $off><I><path d="M1 6L12 1L15 12L3 17Z" fill="#9a9a9a" /><path d="M12 11L20 20" stroke="#9a9a9a" strokeWidth="2" /><circle cx="21" cy="21" r="3" stroke="#9a9a9a" strokeWidth="2" /></I>Remote Point</SmallBtn>
          </Stack>
          <Stack $w={136}>
            <SmallBtn><I><path d="M2 1H20V8M2 1V24H12" stroke={D} strokeWidth="2.200" /><path d="M5 6H16M5 11H13M5 16H11" stroke={D} strokeWidth="2" /><path d="M24 14Q15 9 14 18Q15 27 24 22" stroke={G} strokeWidth="2.800" /></I>Commands</SmallBtn>
            <SmallBtn><I><path d="M1 3H25V18H14L11 22L8 18H1Z" stroke="#555" strokeWidth="2.200" /><path d="M6 10H9M12 10H15M18 10H21" stroke={G} strokeWidth="2.400" /></I>Comment</SmallBtn>
            <SmallBtn><I><path d="M2 1V24H24" stroke="#888" strokeWidth="2.200" /><path d="M7 14V24M12 8V24M17 12V24M22 5V24" stroke={G} strokeWidth="2.600" /></I>Chart</SmallBtn>
          </Stack>
          <Stack $w={155}>
            <SmallBtn><I><path d="M1 5H8L10 1H17L19 5H25V23H1Z" stroke="#555" strokeWidth="2.200" /><circle cx="13" cy="13" r="6" fill={G} stroke="#555" strokeWidth="2.400" /><circle cx="13" cy="13" r="2" fill="#555" /></I>Images<Down w={11} /></SmallBtn>
            <SmallBtn><I><path d="M1 5H25V23H1Z" stroke={D} strokeWidth="2" /><path d="M14 5H25V23H14Z" fill={G} stroke={D} strokeWidth="2" /><path d="M14 1V26M16 12L23 6M16 20L24 13" stroke={D} strokeWidth="1.800" /><path d="M1 4H8M4.500 1V8" stroke="#f01818" strokeWidth="2.200" /></I>Section Plane</SmallBtn>
            <SmallBtn><I><path d="M1 4H18L25 10L21 23H1Z" fill="#f2d800" stroke="#5c5400" strokeWidth="2" /><path d="M5 17L8 9L10 17M12 9V17H15V13H12M20 13H17V17H20" stroke="#8a7c00" strokeWidth="1.400" /><path d="M17 4H25M21 0V8" stroke="#f01818" strokeWidth="2.200" /></I>Annotation</SmallBtn>
          </Stack>
        </GroupBody>
        <GroupLabel>Insert</GroupLabel>
      </Group>
      <Group $w={80}>
        <BigBtn $w={80}>
          <BigIcon $pt={7}><I w={26} h={28}><path d="M2 1H16L22 7V26H2Z" stroke={D} strokeWidth="2.400" fill="#fff" /><path d="M16 1V7H22M6 8H12M6 14H15M6 20H12" stroke={D} strokeWidth="2" /><path d="M24 10L15 25" stroke="#e8c468" strokeWidth="3" /></I></BigIcon>
          Tools
          <BigArrow><Down /></BigArrow>
        </BigBtn>
      </Group>
      <Group $w={80}>
        <BigBtn $w={80}>
          <BigIcon $pt={7}><I w={26} h={28}><path d="M1 1H13V16H1ZM17 1H25V16H17ZM1 20H25V26H1Z" stroke="#5a9cf2" strokeWidth="2.200" /></I></BigIcon>
          Layout
          <BigArrow><Down /></BigArrow>
        </BigBtn>
      </Group>
    </Ribbon>
  );
}

const ArrowsV = <path d="M13 5L17 10H9ZM13 19L17 14H9Z" fill={G} />;

function GraphicsToolbar() {
  return (
    <ToolArea $h={97} $pl={17}>
      <Grip />
      <ToolRows $m="0 12px 0 11px">
        <ToolRow $h={47}>
          <Tool aria-label="Previous view"><Mag><path d="M8 12H18M12 8L8 12L12 16" stroke={G} strokeWidth="2.600" /></Mag></Tool>
          <Tool aria-label="Next view"><Mag c="#aaa"><path d="M8 12H18M14 8L18 12L14 16" stroke="#bbb" strokeWidth="2.600" /></Mag></Tool>
          <Sep />
          <Tool $on aria-label="Shaded with edges"><Cube /></Tool>
          <Tool aria-label="Shaded"><Cube a="#c4c4c4" b="#8e8e8e" c="#a6a6a6" s="#b4b4b4" /></Tool>
          <Tool aria-label="Wireframe"><I w={28} h={28}><path d="M16 3L23 1L27 4V11L20 13L16 10Z" stroke={D} strokeWidth="2" /><path d="M2 16L8 13L14 16V22L8 26L2 23Z" fill={G} stroke="#3c2c04" strokeWidth="1.800" /><path d="M2 16L8 18L14 16V22L8 26Z" fill="#6b4d08" /><path d="M11 3Q4 4 5 11M17 25Q24 24 24 17" stroke={D} strokeWidth="2" strokeDasharray="4 2" /></I></Tool>
          <Sep />
          <Tool aria-label="Tile"><I w={28} h={28}><path d="M2 2H11V11H2ZM15 16H27V27H15ZM21 16V27M15 21H27" stroke="#8c8c8c" strokeWidth="2" /><path d="M13 6L20 13" stroke="#bbb" strokeWidth="1.600" strokeDasharray="2 2" /></I></Tool>
          <Sep />
          <Tool $on $w={60} aria-label="Rotate"><I w={26} h={26}><path d="M4 8A10.500 10.500 0 0 1 20 5M23 9A10.500 10.500 0 0 1 21 20M17 23A10.500 10.500 0 0 1 5 20" stroke="#6a6a6a" strokeWidth="2" /><path d="M0 9L7 8L5 14ZM25 8L19 7L22 3ZM25 19L19 18L20 24Z" fill={G} /></I><Down /></Tool>
          <Tool aria-label="Pan"><I w={28} h={28}><path d="M14 0L19 6H9ZM14 28L19 22H9ZM0 14L6 9V19ZM28 14L22 9V19Z" fill={G} /><path d="M12 8H16V11H12ZM8 12H11V16H8ZM17 12H20V16H17ZM12 17H16V20H12Z" fill="#444" /></I></Tool>
          <Tool aria-label="Zoom"><Mag>{ArrowsV}</Mag></Tool>
          <Tool aria-label="Zoom in"><Mag><path d="M7 12H19M13 6V18" stroke={G} strokeWidth="4" /></Mag></Tool>
          <Tool aria-label="Zoom fit"><Mag><path d="M13 6L18 9V15L13 18L8 15V9Z" fill="#4a80d8" stroke="#556" /></Mag></Tool>
          <Tool aria-label="Zoom selection"><Mag><path d="M13 6L18 9V15L13 18L8 15V9Z" fill="#e8e8ee" stroke="#667" /><path d="M8 9L13 11V18L8 15Z" fill="#10c030" /></Mag></Tool>
          <Tool aria-label="Zoom box"><Mag>{ArrowsV}</Mag></Tool>
          <Sep $l={3} />
          <ToolLabel $l={8} $r={13}>Select</ToolLabel>
          <DropBtn $mr={12}><I w={28} h={26}><path d="M0 0H10V11H0Z" fill="#ff0808" /><path d="M9 6L25 14L19 16L25 23L22 25L16 18L12 23Z" fill="#444" /></I>Mode<Down w={11} /></DropBtn>
          <Tool aria-label="Smart select"><I w={28} h={28}><path d="M2 12V2H12M15 12V2H26M2 26V16H12M6 10V6H10M18 7H24M6 24V20H10M20 17L24 21L22 25" stroke="#a0a0a0" strokeWidth="2.200" /></I></Tool>
          <Tool aria-label="Vertex"><SelCube /></Tool>
          <Tool aria-label="Edge"><SelCube top="#eee" /></Tool>
          <Tool aria-label="Face"><SelCube top="#bdbdbd" /></Tool>
          <Tool aria-label="Body"><SelCube top="#b4b4b4" side="#b4b4b4" front="#b4b4b4" s="#858585" /></Tool>
          <Tool aria-label="Node"><SelCube grid s="#3c3c3c" mark={<circle cx="6" cy="6" r="2.500" fill="#10b020" />} /></Tool>
          <Tool aria-label="Element face"><SelCube grid s="#3c3c3c" mark={<path d="M4 4L8 2H19L24 8H10Z" fill="#0fa01c" />} /></Tool>
          <Tool aria-label="Element"><SelCube grid s="#3c3c3c" mark={<path d="M5 7H17V18H9L5 14Z" fill="#0fa01c" stroke="#0a5a10" />} /></Tool>
          <Tool aria-label="Coordinates"><I w={30} h={28}><path d="M1 3L6 9M6 3L1 9M12 3L15 6L18 3M15 6V9M23 3H28L23 9H28M14 13L20 19L18 20V25" stroke="#c4c4c4" strokeWidth="1.800" /></I></Tool>
          <Tool aria-label="Label"><I w={28} h={28}><path d="M1 2H22L27 8L22 14H1Z" stroke="#444" strokeWidth="2" fill="#fff" /><path d="M6 5V11M10 5H13V11H10ZM17 5H20V11H17Z" stroke="#333" strokeWidth="1.600" /><path d="M11 14L19 19L16 20L17 27L13 19" fill={G} stroke={G} strokeWidth="1.600" /></I></Tool>
          <Tool aria-label="Annotation tag"><I w={28} h={28}><path d="M2 3H20L26 12L20 22H2Z" fill="#cfcfcf" stroke="#a4a4a4" strokeWidth="2" /><path d="M5 16L7 9L10 16M12 8V16H15V12H12M21 12H18V16H21M20 22L24 27" stroke="#8c8c8c" strokeWidth="1.600" /></I></Tool>
        </ToolRow>
        <ToolRow $h={50}>
          <ToolLabel $l={8} />
          <DropBtn><I w={26} h={26}><path d="M1 2H25V25H1Z" fill="#e6bd45" stroke="#8a6a18" strokeWidth="1.600" /><path d="M1 2H25V7H1Z" fill="#4c4428" /><path d="M8 5L13 2L18 5Z" fill={G} /></I>Clipboard<Down w={11} /></DropBtn>
          <ToolLabel>[ Empty ]</ToolLabel>
          <Sep $l={10} $r={12} />
          <DropBtn><I w={26} h={26}><path d="M13 2L24 8V19L13 25L2 19V8Z" fill="#fff" stroke="#555" strokeWidth="2" /><path d="M2 9L13 13V25L2 19Z" fill="#12d828" stroke="#555" /><path d="M13 13L24 8M10 6H16M13 3V9" stroke={G} strokeWidth="2" /></I>Extend<Down w={11} /></DropBtn>
          <DropBtn><I w={26} h={26}><path d="M13 20Q6 12 6 7A7 7 0 0 1 20 7Q20 12 13 20Z" fill={G} /><circle cx="13" cy="7" r="2.600" fill="#fff" /><path d="M1 21L3 25H23L25 21" stroke="#666" strokeWidth="2" /></I>Select By<Down w={11} /></DropBtn>
          <DropBtn><I w={26} h={26}><path d="M8 6L13 3H23L25 6V19L22 23H10L8 19Z" fill="#12e028" stroke="#3a3a3a" strokeWidth="2" /><path d="M8 6L12 8V23M12 8H25" stroke="#2a2a2a" strokeWidth="1.800" /><path d="M0 11H7M4 8L7 11L4 14" stroke={G} strokeWidth="2" /></I>Convert<Down w={11} /></DropBtn>
        </ToolRow>
      </ToolRows>
      <Overflow $at="flex-end" $m="0 -4px 22px -12px" aria-label="More"><Down c="#111" w={15} /></Overflow>
    </ToolArea>
  );
}

const Film = ({ c }) => (
  <I w={28} h={28}><path d="M3 3V21M9 3V21M15 3V21M24 3V21" stroke={c} strokeWidth="2" /><path d="M2 2H26M2 21H26" stroke="#555" strokeWidth="2" /><path d="M0 27L4 23L8 27L11 23L14 27ZM20 27L24 23L28 27Z" fill="#f01818" /></I>
);
const Strip = ({ tail }) => (
  <I w={28} h={22}><path d="M0 0H28V22H0Z" fill="#b8b8b8" /><path d="M1 3H27M1 19H27" stroke="#666" strokeWidth="3" strokeDasharray="3 2" /><circle cx="9" cy="11" r="3" stroke="#888" strokeWidth="2" /><path d="M12 11H21" stroke="#888" strokeWidth="2" />{tail && <circle cx="24" cy="18" r="3" fill="#eee" stroke="#999" />}</I>
);

function GraphPanel() {
  return (
    <Dock>
      <Head title="Graph" h={31} />
      <ToolArea $h={149} $pl={18}>
        <Grip $m="10px 0 8px" />
        <ToolRows $m="2px 7px 0 12px">
          <ToolRow $h={47}>
            <ToolLabel $l={6} $r={5}>Animation</ToolLabel>
            <Tool aria-label="First frame"><I w={26} h={26}><path d="M2 0V26" stroke="#8a8a8a" strokeWidth="5" /><path d="M25 2V24L9 13Z" fill="#c4c4c4" /></I></Tool>
            <Tool aria-label="Play"><I w={26} h={26}><path d="M6 2V24L22 13Z" fill={G} /></I></Tool>
            <Tool $on aria-label="Stop"><I w={24} h={24}><path d="M1 1H23V23H1Z" fill={G} stroke="#555" strokeWidth="2.400" /></I></Tool>
            <Tool aria-label="Last frame"><I w={26} h={26}><path d="M24 0V26" stroke="#8a8a8a" strokeWidth="5" /><path d="M1 2V24L17 13Z" fill="#c4c4c4" /></I></Tool>
            <Sep />
            <Tool $on aria-label="Distributed"><Film c="#18e018" /></Tool>
            <Tool aria-label="Result sets"><Film c="#2d96f0" /></Tool>
          </ToolRow>
          <ToolRow $h={51}>
            <Drop label="Frames" value="20 Frames" w={179} />
            <Drop label="Duration" value="2 Sec (Auto)" w={180} />
            <Sep />
            <Tool aria-label="Export video"><I w={28} h={28}><path d="M1 2H27V24H1Z" fill="#fff" stroke="#444" strokeWidth="2" /><path d="M1 4H27M1 23H14" stroke="#444" strokeWidth="4" strokeDasharray="3 1.500" /><path d="M6 14Q11 7 17 12" stroke="#e82020" strokeWidth="3" /><path d="M14 13H27V27H14Z" fill="#fff" stroke="#3d8cf0" strokeWidth="2" /><path d="M18 27V21H23V27M18 13V17H23V13" stroke="#3d8cf0" strokeWidth="1.800" /></I></Tool>
            <Sep />
            <Tool aria-label="Zoom to fit"><I w={28} h={28}><circle cx="12" cy="11" r="9.500" stroke="#666" strokeWidth="2.400" fill="#f4f4f4" /><path d="M18 18L25 26" stroke="#666" strokeWidth="3" /><path d="M8 6V17L17 11Z" fill={G} /></I></Tool>
            <Tool aria-label="Contours"><I w={28} h={28}><path d="M1 5H28" stroke="#f01010" strokeWidth="8" strokeDasharray="4 1.700" /><path d="M1 14H28" stroke="#10e010" strokeWidth="7" strokeDasharray="4 1.700" /><path d="M1 23H28" stroke="#1010f0" strokeWidth="8" strokeDasharray="4 1.700" /></I></Tool>
            <Tool aria-label="Path"><I w={28} h={28}><path d="M1 15Q8 12 12 9Q22 10 26 2M12 9Q20 14 14 26M14 12Q20 18 18 26" stroke="#aaa" strokeWidth="2" /></I></Tool>
            <Tool aria-label="Camera"><I w={28} h={28}><path d="M8 2L27 11L23 18L5 9Z" fill="#a4a4a4" /><path d="M1 14V25M2 22H10L15 15" stroke="#a4a4a4" strokeWidth="4" /></I></Tool>
          </ToolRow>
          <ToolRow $h={51}>
            <Tool aria-label="Keyframe"><Strip /></Tool>
            <Tool aria-label="Keyframe options"><Strip tail /></Tool>
            <Sep $l={2} $r={3} />
            <Tool aria-label="Damping"><I w={28} h={28}><path d="M2 2V26M6 4V22M10 7V19H13V9H16V18M19 10V16M19 14H28" stroke="#a4a4a4" strokeWidth="2" /></I></Tool>
            <CycleBox><input aria-label="Cycles" defaultValue="3 Cycles" /></CycleBox>
          </ToolRow>
        </ToolRows>
        <Overflow $at="flex-end" $m="0 6px 34px 4px" aria-label="More"><Down c="#111" w={15} /></Overflow>
      </ToolArea>
      <GraphArea>
        <Track $h={9} $c="#111" />
        <Track $h={28} $c="#888" />
      </GraphArea>
    </Dock>
  );
}

function TabularPanel() {
  const series = [['Minimum [m]', '#c80000'], ['Maximum [m]', '#008a00'], ['Average [m]', '#0808c8']];
  return (
    <Dock>
      <Head title="Tabular Data" flush />
      <DataArea>
        <DataTable>
          <colgroup><col width="27" /><col width="82" /><col width="155" /><col width="161" /><col width="153" /></colgroup>
          <thead>
            <tr>
              <th aria-label="Row" />
              <th>Time [s]</th>
              {series.map(([s, c]) => <th key={s}><SeriesHead $c={c}><Tick $sunken $tick="#000" defaultChecked />{s}</SeriesHead></th>)}
            </tr>
          </thead>
          <tbody>
            <tr><th>1</th><td>1.</td><td>2.9703e-006</td><td>6.0847e-006</td><td>4.8042e-006</td></tr>
          </tbody>
        </DataTable>
      </DataArea>
    </Dock>
  );
}

function OutlineDock() {
  return (
    <Dock>
      <Head title="Outline" on />
      <Filter>
        <Grip $m="9px 12px 8px 0" />
        <Drop label="Filter by" value="Name" w={180} />
        <SearchInput aria-label="Search outline" placeholder="Search Outline" />
        <I w={24} h={12}><path d="M2 2L12 10L22 2" stroke="#d9a520" strokeWidth="3" /></I>
        <Overflow $m="22px 0 0 9px" aria-label="More"><Down c="#111" w={15} /></Overflow>
      </Filter>
      <TreeArea>
        <TreeLines width="240" height="530" aria-hidden="true">
          <path d="M21 26V36M70 52V288M119 110V124M119 224V244M119 312V402M167 426V504" stroke="#777" strokeDasharray="1 2" fill="none" />
        </TreeLines>
        <Tree>{nodes.map((n) => <Node key={n[0]} n={n} />)}</Tree>
      </TreeArea>
      <Head title={'Details of "Total Deformation"'} />
      <Details>
        <DetailTable>
          <colgroup><col width="25" /><col width="215" /><col width="238" /></colgroup>
          <tbody>
            {details.map(([k, v, g, tick], i) => (v === undefined ? (
              <tr key={k}><td><Toggle open /></td><th colSpan={2}>{k}</th></tr>
            ) : (
              <tr key={k + i}>
                <td />
                <th scope="row">{tick ? <Inline><SmallTick aria-label={k || 'Minimum'} />{k}</Inline> : k}</th>
                <Val $g={g}>{v}</Val>
              </tr>
            )))}
          </tbody>
        </DetailTable>
        <Scroll>
          <ScrollBtn aria-label="Scroll up"><I w={14} h={8}><path d="M0 8L7 0L14 8Z" fill="#000" /></I></ScrollBtn>
          <Thumb />
          <ScrollBtn aria-label="Scroll down"><Down c="#000" w={14} /></ScrollBtn>
        </Scroll>
      </Details>
    </Dock>
  );
}

function ChartEmoji() {
  return (
    <Cell><I w={36} h={36}><path d="M0 0H35V36H0Z" fill="#eceff1" /><path d="M0 9H35M0 18H35M0 27H35M9 0V36M18 0V36M27 0V36" stroke="#cfd8dc" strokeWidth="1" /><path d="M4 15H9V35H4Z" fill="#3f7de8" /><path d="M11 23H16V35H11Z" fill="#dc4437" /><path d="M18 9H24V35H18Z" fill="#f2c50f" /><path d="M26 28H31V35H26Z" fill="#1f9d58" /></I></Cell>
  );
}
function LensEmoji() {
  return (
    <Cell><I w={36} h={38}><path d="M20 20L26 26" stroke="#90a4ae" strokeWidth="4" /><path d="M24 25L32 35" stroke="#f78c06" strokeWidth="7" strokeLinecap="round" /><circle cx="12.500" cy="13" r="11" fill="#7dd1fb" stroke="#9fb3bd" strokeWidth="2.400" /><ellipse cx="10" cy="8" rx="6" ry="4" fill="#b8e8fd" /></I></Cell>
  );
}

const mosaicTop = ['#868686', '#4a4a4a', '#868686', '#4a4a4a', '#7c7c7c', '#454545', '#808080', '#3c3c3c'];
const mosaicLow = ['#3a3a3a', '#484848', '#555', '#424242', '#4a4a4a', '#303030', '#3e3e3e', '#2e2e2e'];
function Redacted() {
  return (
    <Blur aria-label="redacted">
      <I w={170} h={42}>
        <path d="M0 42V28Q12 20 14 8L22 0H140Q164 4 168 14V42Z" fill="#303030" />
        {mosaicTop.map((c, i) => <path key={i} d={`M${22 + i * 18} 6h18v18h-18z`} fill={c} />)}
        {mosaicLow.map((c, i) => <path key={i} d={`M${22 + i * 18} 24h18v18h-18z`} fill={c} />)}
      </I>
    </Blur>
  );
}

function Terminal() {
  const p = '  ';
  return (
    <Lines>
      <TLine>{p}<Cell $n={1}>⎿</Cell>  Read image (98.7KB)</TLine>
      <TLine />
      <TLine><b>● </b><B t="ANSYS 结果分析 - Total" /></TLine>
      <TLine>{p}<B t="Deformation（总变形）" /></TLine>
      <TLine />
      <TLine>{p}<B t="分析信息：" /></TLine>
      <TLine>{p}<B t="- 分析类型：" />Static</TLine>
      <TLine>{p}<T t="Structural（静态结构分析）" /></TLine>
      <TLine>{p}<B t="- 结果类型：" /><T t="Total Deformation（总变形量）" /></TLine>
      <TLine>{p}<B t="- 单位：" /><T t="米 (m)" /></TLine>
      <TLine>{p}<B t="- 时间步：" /><T t="1 秒" /></TLine>
      <TLine>{p}<B t="- 生成时间：" /><T t="2025年12月4日 20:13" /></TLine>
      <TLine>{p}<B t="- 软件版本：" />ANSYS 2024 R1</TLine>
      <TLine />
      <TLine>{p}<b>---</b></TLine>
      <TLine $c="#8c8c8c">{p}<ChartEmoji /><T t=" 变形数据" /></TLine>
      <TLine />
      <TLine>{p}<T t="| 项目   | 数值          | 单位      |" /></TLine>
      <TLine>{p}|------|-------------|---------|</TLine>
      <TLine>{p}| <B t="最大变形" /> | 6.0847e-6 m | <b>6.08 µm</b> |</TLine>
      <TLine>{p}| <B t="最小变形" /> | 2.9703e-6 m | <b>2.97 µm</b> |</TLine>
      <TLine>{p}| <B t="变形范围" /> | 3.11 µm     | <T t="(最大-最小) |" /></TLine>
      <TLine />
      <TLine>{p}<b>---</b></TLine>
      <TLine $c="#8c8c8c">{p}<LensEmoji /><T t=" 结构特征分析" /></TLine>
      <TLine />
      <TLine>{p}<B t="几何结构：" /></TLine>
      <TLine>{p}<B t="- 类型：" /><T t="细长梁/悬臂梁结构" /></TLine>
      <TLine>{p}<B t="- 长度：" /><T t="约 10 mm（从比例尺看）" /></TLine>
      <TLine>{p}<B t="- 应用：" /><Redacted /><T t="校准装置的测量臂" /></TLine>
      <TLine />
      <TLine>{p}<B t="变形模式：" /></TLine>
      <TLine>{p}<T t="固定端 ←━━━━━━━━━━━━━━━━━━→ 自由端" /></TLine>
      <TLine>{p}<T t="（蓝色）                    （红色）" /></TLine>
    </Lines>
  );
}

const tabs = ['Home', 'Result', 'Display', 'Selection', 'Automation', 'Add-ons', 'Learning and Support'];

export default function App() {
  return (
    <Page>
      <Global />
      <Browser>
        <TabStrip><ActiveTab /></TabStrip>
        <NavRow>
          <NavBtn $w={45} aria-label="Back"><I w={26} h={26}><path d="M25 13H3M13 2L2 13L13 24" stroke="currentColor" strokeWidth="2.800" /></I></NavBtn>
          <NavBtn $w={97} $c="#a8a8a8" aria-label="Forward"><I w={26} h={26}><path d="M1 13H23M13 2L24 13L13 24" stroke="currentColor" strokeWidth="2.800" /></I></NavBtn>
          <NavBtn $w={48} aria-label="Reload"><I w={26} h={26}><path d="M23 13A10.500 10.500 0 1 1 19 4.500L23 8.500" stroke="currentColor" strokeWidth="2.800" /><path d="M24 1V10H15" stroke="currentColor" strokeWidth="2.800" /></I></NavBtn>
          <AddressBar>
            <SiteInfo aria-label="Site information"><I w={26} h={26}><circle cx="6" cy="6.500" r="3.400" stroke="#1f1f1f" strokeWidth="2.600" /><circle cx="20" cy="19.500" r="3.400" stroke="#1f1f1f" strokeWidth="2.600" /><path d="M13 6.500H24M2 19.500H13" stroke="#1f1f1f" strokeWidth="2.800" /></I></SiteInfo>
            <UrlBox><b>10.10.17.22</b>/ide/web/coding/ansys/hongxi</UrlBox>
            <NavBtn $w={64} aria-label="Clipboard"><I w={28} h={32}><path d="M2 5H26V30H2Z" stroke="currentColor" strokeWidth="2.800" /><path d="M7 4H11A3.200 3.200 0 0 1 17 4H21V11H7Z" fill="currentColor" /><circle cx="14" cy="4.500" r="1.300" fill="#edf1fa" /></I></NavBtn>
            <NavBtn $w={64} aria-label="Zoom level"><I w={30} h={30}><circle cx="11.500" cy="11.500" r="8.500" stroke="currentColor" strokeWidth="2.600" /><path d="M8 11.500H15M18 18L28 28" stroke="currentColor" strokeWidth="2.600" /></I></NavBtn>
            <NavBtn $w={64} aria-label="Bookmark"><I w={32} h={32}><path d="M16 3L20 12.500L30 13.300L22.400 20L24.800 29.500L16 24.300L7.200 29.500L9.600 20L2 13.300L12 12.500Z" stroke="currentColor" strokeWidth="2.600" /></I></NavBtn>
          </AddressBar>
          <NavBtn $w={68} $c="#0b57d0" aria-label="Profile"><I w={32} h={32}><circle cx="16" cy="16" r="14.500" stroke="currentColor" strokeWidth="2.800" /><circle cx="16" cy="12.500" r="4.600" stroke="currentColor" strokeWidth="2.800" /><path d="M6 26Q16 17 26 26" stroke="currentColor" strokeWidth="2.800" /></I></NavBtn>
          <NavBtn $w={76} aria-label="Browser menu"><I w={6} h={28}><circle cx="3" cy="3" r="2.800" fill="currentColor" /><circle cx="3" cy="14" r="2.800" fill="currentColor" /><circle cx="3" cy="25" r="2.800" fill="currentColor" /></I></NavBtn>
        </NavRow>
      </Browser>

      <Body>
        <Remote>
          <TitleBar>
            <I w={28} h={28}><path d="M0 0H28V28H0Z" fill="#000" /><circle cx="10" cy="18" r="6" stroke="#f2a623" strokeWidth="4.400" /><circle cx="10" cy="18" r="8.500" stroke="#f2a623" strokeWidth="3" strokeDasharray="3.300 3.300" /><circle cx="21" cy="8" r="4" stroke="#f2a623" strokeWidth="3" /><circle cx="21" cy="8" r="6" stroke="#f2a623" strokeWidth="2.400" strokeDasharray="2.400 2.300" /></I>
            <span>A : Static Structural - Mechanical [Ansys Mechanical Enterprise]</span>
            <WinButtons>
              <WinButton aria-label="Minimize"><I w={18} h={18}><path d="M3 15H13" stroke="#000" strokeWidth="4" /></I></WinButton>
              <WinButton aria-label="Restore"><I w={18} h={18}><path d="M6 1H16V10H6ZM1 8H11V17H1Z" stroke="#000" strokeWidth="2" fill="#c0c0c0" /><path d="M6 2H16M1 9H11" stroke="#000" strokeWidth="3" /></I></WinButton>
              <WinButton aria-label="Close"><I w={18} h={18}><path d="M3 2L15 16M15 2L3 16" stroke="#000" strokeWidth="3" /></I></WinButton>
            </WinButtons>
          </TitleBar>
          <RibbonTop>
            <QuickAccess>
              <button aria-label="Save"><I w={26} h={25}><path d="M1 1H25V24H1ZM6 1V12H20V1M7 24V17H18V24M12 19V24" stroke="#4a94f2" strokeWidth="2.200" /></I></button>
              <button aria-label="Customize"><I w={14} h={14}><path d="M0 0H14V4H0Z" fill="#555" /><path d="M1 6H13L7 13Z" fill="#555" /></I></button>
            </QuickAccess>
            <ContextTab>Context</ContextTab>
          </RibbonTop>
          <TabRow>
            <FileTab>File</FileTab>
            {tabs.map((t, i) => <Tab key={t} $on={i === 0}>{t}</Tab>)}
            <TabTail>
              <QuickLaunch aria-label="Quick Launch" placeholder="Quick Launch" />
              <I w={22} h={14}><path d="M2 12L11 2L20 12" stroke={G} strokeWidth="3" /></I>
              <I w={26} h={26}><path d="M2 4L22 1L25 21L5 25Z" stroke="#555" strokeWidth="2" fill="#fff" /><path d="M7 12L12 19L21 4" stroke={G} strokeWidth="2.800" /></I>
              <I w={26} h={26}><circle cx="13" cy="13" r="12.500" fill="#3f8ff0" /><path d="M9 10Q9 6 13 6Q17 6 17 9.500Q17 12 13 14V16M13 18.500V21" stroke="#fff" strokeWidth="2.600" /></I>
              <Down c="#111" w={15} />
            </TabTail>
          </TabRow>
          <RibbonBar />
          <Workspace>
            <OutlineDock />
            <Dock>
              <GraphicsToolbar />
              <Viewport>
                <SceneDrawing />
                <Caption>
                  <div><b>A: Static Structural</b></div>
                  <div>Total Deformation</div>
                  <div>Type: Total Deformation</div>
                  <div>Unit: m</div>
                  <div>Time: 1 s</div>
                  <div>12/4/25 8:22 PM</div>
                </Caption>
                <Legend>
                  <LegendBar>{legendColors.map((c) => <Swatch key={c} $c={c} />)}</LegendBar>
                  <LegendText>
                    <li><b>6.0847e-6 Max</b></li>
                    {legendValues.map((v) => <li key={v}>{v}</li>)}
                    <li><b>2.9703e-6 Min</b></li>
                  </LegendText>
                </Legend>
                <Brand>
                  <BrandName><I w={57} h={48} vb="0 0 57 48"><path d="M22 0H33L38 9L17 48H0Z" fill="#fff" /><path d="M35 0L57 48H41L28 20Z" fill="#fff" /><path d="M36 0L26 18" stroke="#7d97e2" strokeWidth="1.600" /></I>nsys</BrandName>
                  <BrandVer>2024 R1</BrandVer>
                </Brand>
                <Ruler>
                  <RulerTop><span>0</span><span>0.01 (m)</span></RulerTop>
                  <RulerBar />
                  <RulerMid>0.005</RulerMid>
                </Ruler>
              </Viewport>
              <Bottom>
                <GraphPanel />
                <TabularPanel />
              </Bottom>
            </Dock>
          </Workspace>
          <Status>
            <StatusItem>Ready</StatusItem>
            <StatusItem $ml="auto">No Messages</StatusItem>
            <StatusItem $ml="8px">No Selection</StatusItem>
            <StatusItem $ml="8px">Metric (m, kg, N, s, V, A)</StatusItem>
            <StatusItem>Degrees</StatusItem>
            <StatusItem>rad/s</StatusItem>
            <StatusItem>Celsius</StatusItem>
          </Status>
        </Remote>

        <Assistant>
          <AssistHead><Vibe />氛围编程</AssistHead>
          <Pane>
            <PaneIcon aria-label="Layout"><I w={24} h={26}><path d="M0 1H24V14H13V25H0Z" fill="#111" /><path d="M2 3H11V12H2Z" fill="#d00808" /><path d="M13 3H22V12H13Z" fill="#1270c8" /><path d="M2 14H11V23H2Z" fill="#c4c4c4" /><path d="M14 17H24L19 23Z" fill="#111" /></I></PaneIcon>
            <PaneTitle>✳ Image Analysis</PaneTitle>
          </Pane>
          <TermWrap>
            <Term><Terminal /></Term>
            <TermScroll />
          </TermWrap>
        </Assistant>

        <Side>
          <Avatar>h</Avatar>
          <SideBtn $mt={26} aria-label="Share"><I w={26} h={28}><circle cx="20" cy="5" r="3.600" stroke="currentColor" strokeWidth="2.200" /><circle cx="5" cy="14" r="3.600" stroke="currentColor" strokeWidth="2.200" /><circle cx="20" cy="23" r="3.600" stroke="currentColor" strokeWidth="2.200" /><path d="M17 7L8 12M8 16L17 21" stroke="currentColor" strokeWidth="2.200" /></I></SideBtn>
          <SideRule />
          <SideBtn $on $mt={19} aria-label="Vibe coding"><Vibe /></SideBtn>
          <SideBtn aria-label="Assistant"><I w={32} h={34}><path d="M6 1L9 6M26 1L23 6M10 6H22Q27 6 27 11V22Q27 27 22 27H10Q5 27 5 22V11Q5 6 10 6ZM1 14V20M31 14V20M9 33H23" stroke="currentColor" strokeWidth="2.400" strokeLinecap="round" /><path d="M12 13V18M20 13V18" stroke="currentColor" strokeWidth="3.400" strokeLinecap="round" /></I></SideBtn>
          <SideBtn aria-label="Links"><I w={28} h={28}><path d="M5 1H23Q27 1 27 5V23Q27 27 23 27H5Q1 27 1 23V5Q1 1 5 1Z" stroke="currentColor" strokeWidth="2.200" /><path d="M12 12L15 8Q18 6 20 8.500Q22 11 19 13.500L16 16M16 15L13 19Q10 22 8 19Q6 17 8.500 14.500L12 11M11 17L17 11" stroke="currentColor" strokeWidth="2" /></I></SideBtn>
          <SideBtn aria-label="Files"><I w={30} h={28}><path d="M2 2H11L15 6H28V26H2Z" stroke="currentColor" strokeWidth="2.400" strokeLinejoin="round" /></I></SideBtn>
          <SideBtn aria-label="Tasks"><I w={26} h={26}><path d="M2 2H10V10H2ZM2 16H10V24H2ZM14 3H25M14 9H25M14 17H25M14 23H25" stroke="currentColor" strokeWidth="2.400" /></I></SideBtn>
          <SideBtn $mt={817} aria-label="Power"><I w={28} h={28}><path d="M8 4A11.500 11.500 0 1 0 20 4M14 1V14" stroke="currentColor" strokeWidth="2" /></I></SideBtn>
        </Side>
      </Body>

      <Marks aria-hidden="true">
        {Array.from({ length: 16 }, (_, i) => <Mark key={i}><span>hongxi@cloudtogo.cn</span></Mark>)}
      </Marks>
    </Page>
  );
}
